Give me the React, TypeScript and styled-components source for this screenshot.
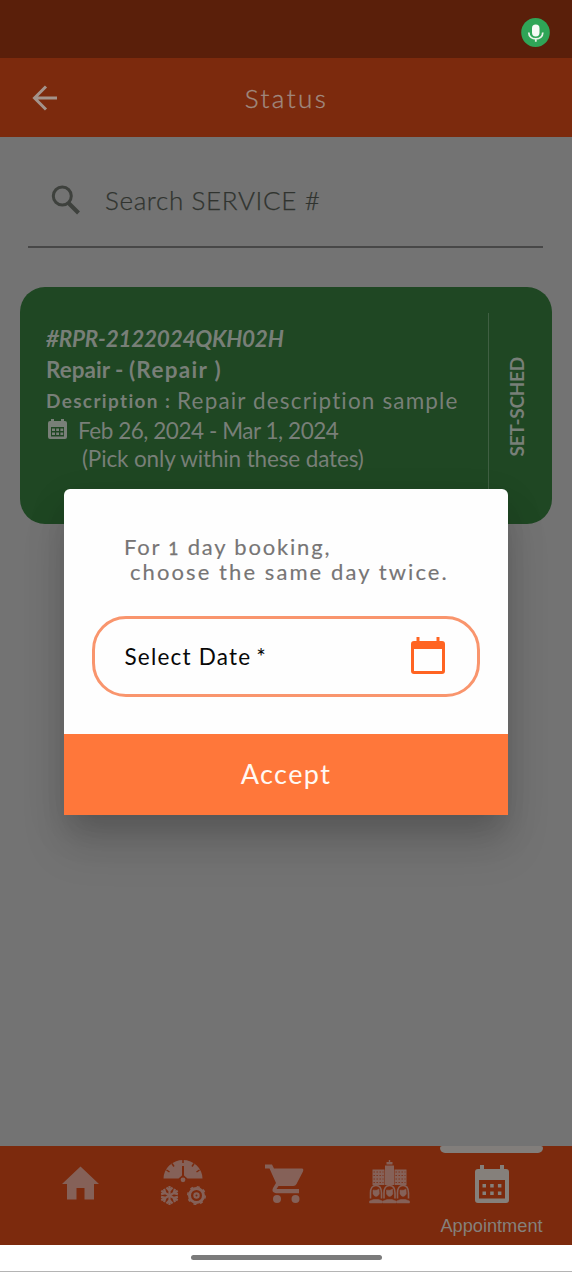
import React from "react";
import styled, { createGlobalStyle } from "styled-components";

const GlobalStyle = createGlobalStyle`
  * { box-sizing: border-box; }
  body { margin: 0; background: #737373; font-family: Lato, "Liberation Sans", sans-serif; }
`;

const Screen = styled.div`
  position: relative;
  width: 572px;
  height: 1272px;
  display: flex;
  flex-direction: column;
  overflow: hidden;
  background: #737373;
`;

const StatusBar = styled.div`
  height: 58px;
  flex: none;
  display: flex;
  justify-content: flex-end;
  padding: 18px 22px 0 0;
  background: #5a1f0a;
`;

const Header = styled.header`
  height: 79px;
  flex: none;
  display: grid;
  grid-template-columns: 72px 1fr 72px;
  align-items: center;
  background: #7c2a0d;
  svg { margin-left: 30px; }
`;

const Title = styled.h1`
  margin: 0;
  padding-left: 1px;
  text-align: center;
  font-size: 26px;
  font-weight: 300;
  letter-spacing: 2.4px;
  color: #a08a80;
  -webkit-text-stroke: 0.35px #a08a80;
`;

const Content = styled.main`
  flex: 1;
  padding: 0 20px;
`;

const SearchField = styled.div`
  height: 111px;
  margin: 0 9px 39px 8px;
  padding: 15px 0 0 22px;
  display: flex;
  align-items: center;
  gap: 21px;
  border-bottom: 2px solid #474747;
  font-size: 26px;
  font-weight: 300;
  letter-spacing: 0.65px;
  color: #30332f;
  -webkit-text-stroke: 0.25px #30332f;
  span { padding-top: 1px; }
`;

const Card = styled.section`
  height: 237px;
  display: flex;
  border-radius: 25px;
  background: #1f4723;
  color: #787f78;
`;

const CardBody = styled.div`
  width: 469px;
  margin: 26px 0;
  padding: 10px 0 0 26px;
  border-right: 1px solid #3f5f42;
`;

const Line = styled.div<{ $h: number; $size?: number; $spacing?: number; $bold?: boolean; $italic?: boolean; $indent?: number }>`
  height: ${(p) => p.$h}px;
  line-height: ${(p) => p.$h}px;
  padding-left: ${(p) => p.$indent ?? 0}px;
  display: flex;
  white-space: pre;
  font-size: ${(p) => p.$size ?? 22.5}px;
  letter-spacing: ${(p) => p.$spacing ?? 0}px;
  font-weight: ${(p) => (p.$bold ? 700 : 400)};
  font-style: ${(p) => (p.$italic ? "italic" : "normal")};
`;

const Spaced = styled.span<{ $spacing: number; $size?: number; $bold?: boolean }>`
  letter-spacing: ${(p) => p.$spacing}px;
  font-size: ${(p) => p.$size ?? 22.5}px;
  font-weight: ${(p) => (p.$bold ? 700 : 400)};
`;

const CardSide = styled.div`
  width: 63px;
  display: flex;
  align-items: center;
  justify-content: center;
  span {
    writing-mode: vertical-rl;
    transform: rotate(180deg);
    font-size: 19px;
    letter-spacing: -0.25px;
    font-weight: 700;
    margin: 2px 8px 0 0;
  }
`;

const Dialog = styled.div`
  position: absolute;
  left: 64px;
  top: 489px;
  width: 444px;
  height: 326px;
  display: flex;
  flex-direction: column;
  border-radius: 6px 6px 0 0;
  background: #fefefe;
  box-shadow: 0 18px 26px -10px rgba(0, 0, 0, 0.13), 0 32px 44px 2px rgba(0, 0, 0, 0.1), 0 14px 40px 2px rgba(0, 0, 0, 0.08);
`;

const Message = styled.p`
  margin: 0;
  padding: 45px 0 0 60px;
  height: 127px;
  line-height: 25px;
  font-size: 22px;
  color: #777575;
  -webkit-text-stroke: 0.15px #777575;
`;

const MessageLine = styled.span<{ $spacing: number; $indent?: number }>`
  display: block;
  height: 25px;
  white-space: pre;
  padding-left: ${(p) => p.$indent ?? 0}px;
  letter-spacing: ${(p) => p.$spacing}px;
`;

const SmallDigit = styled.span`
  font-size: 17.5px;
  -webkit-text-stroke: 0.4px #777575;
`;

const DateField = styled.div`
  width: 388px;
  height: 81px;
  margin-left: 28px;
  padding: 0 31px 2px 29.5px;
  display: flex;
  align-items: center;
  justify-content: space-between;
  border: 3px solid #f9956d;
  border-radius: 34px;
  font-size: 22.5px;
  letter-spacing: 1.2px;
  color: #080808;
`;

const DateLabel = styled.span`
  padding-top: 2px;
`;

const Asterisk = styled.span`
  margin-left: -2px;
`;

const AcceptButton = styled.button`
  height: 81px;
  margin-top: auto;
  padding: 0 0 3px;
  border: 0;
  background: #ff773a;
  color: #fff8f2;
  font: 400 27px Lato, sans-serif;
  letter-spacing: 1.4px;
`;

const NavBar = styled.nav`
  height: 99px;
  flex: none;
  display: grid;
  grid-template-columns: repeat(5, 103px);
  padding-left: 28px;
  background: #7c2a0d;
`;

const NavItem = styled.div<{ $active?: boolean }>`
  display: flex;
  flex-direction: column;
  align-items: center;
  color: ${(p) => (p.$active ? "#85807b" : "#856158")};
  white-space: nowrap;
`;

const Indicator = styled.div<{ $active?: boolean }>`
  width: 103px;
  height: 7px;
  margin-bottom: 5px;
  border-radius: 2px 2px 5px 5px;
  background: ${(p) => (p.$active ? "#827e7b" : "transparent")};
`;

const NavLabel = styled.span`
  font: 18.2px/24px "Liberation Sans", sans-serif;
`;

const GestureBar = styled.div`
  height: 27px;
  flex: none;
  display: flex;
  justify-content: center;
  padding-top: 10px;
  background: #fff;
  border-bottom: 1px solid #b4b4b4;
`;

const Handle = styled.div`
  width: 191px;
  height: 5px;
  border-radius: 3px;
  background: #7b7b7b;
`;

const MicBadge = () => (
  <svg width="29" height="30" viewBox="0 0 29 30">
    <ellipse cx="14.5" cy="14.500" rx="14.300" ry="14.5" fill="#2fa557" />
    <rect x="11" y="6.5" width="7.500" height="12" rx="3.7" fill="#f6faf6" />
    <path d="M7.800 14.500c0 8.500 14 8.500 14 0M14.800 20.800v3" fill="none" stroke="#e8f2e8" strokeWidth="1.8" />
  </svg>
);

const BackArrow = () => (
  <svg width="32" height="32" viewBox="0 0 32 32" fill="none" stroke="#a3938b" strokeWidth="3">
    <path d="M27 16H4.500M16 4.500 4.500 16 16 27.500" />
  </svg>
);

const SearchIcon = () => (
  <svg width="34" height="34" viewBox="0 0 34 34" fill="none" stroke="#3e413d">
    <circle cx="12.300" cy="14" r="9" strokeWidth="3" />
    <path d="m18.500 21 10 10" strokeWidth="4" />
  </svg>
);

const SmallCalendar = () => (
  <svg width="32" height="28" viewBox="0 0 32 28">
    <g transform="translate(0 1)">
      <path fill="#787f78" d="M4 4h1V2h3v2h7V2h3v2h1q2 0 2 2v14q0 2-2 2H4q-2 0-2-2V6q0-2 2-2Z" />
      <path fill="#1f4723" d="M5 10h13v9.500H5z" />
      <path fill="#787f78" d="M6 11.500h3V14H6zm4.200 0H13V14h-2.800zm4.200 0h2.800V14h-2.800zM6 15.500h3V18H6zm4.200 0H13V18h-2.800zm4.200 0h2.800V18h-2.800z" />
    </g>
  </svg>
);

const DateIcon = () => (
  <svg width="35" height="40" viewBox="0 0 35 40">
    <path
      fill="#ff6422"
      fillRule="evenodd"
      d="M3 5h2.500V1h3v4h17V1h3v4H31q3 0 3 3v27q0 3-3 3H3q-3 0-3-3V8q0-3 3-3Zm0 8v22h28V13Z"
    />
  </svg>
);

const NavSvg = styled.svg`
  display: block;
  flex: none;
`;

const HomeIcon = () => (
  <NavSvg width="48" height="56" viewBox="0 0 48 56" fill="currentColor">
    <path d="M24.500 8.500 43 26h-5v15.500h-9.500V30h-8v11.500H11V26H6Z" />
  </NavSvg>
);

const DialIcon = () => (
  <NavSvg width="48" height="56" viewBox="0 0 48 56">
    <path fill="currentColor" d="M4.500 20.500a19.500 18.500 0 0 1 39 0H28.500L25 17.500V8h-2v9.500l-3.500 3Z" />
    <path stroke="#7c2a0d" strokeWidth="1.500" d="M24 1v4M13 5.500l2 3M35 5.500l-2 3M7.500 12l3 2M40.500 12l-3 2" />
    <circle cx="24" cy="21.800" r="2.400" fill="currentColor" />
    <g stroke="currentColor" fill="none">
      {[0, 60, 120, 180, 240, 300].map((angle) => (
        <path
          key={angle}
          transform={`rotate(${angle} 10.500 37.500)`}
          strokeWidth="2.200"
          d="M10.500 37.500v-9.500M7.500 29.500l3 3.300 3-3.300"
        />
      ))}
      <circle cx="37.500" cy="37.500" r="7" strokeWidth="3" />
      <circle cx="37.500" cy="37.500" r="8.700" strokeWidth="1.600" strokeDasharray="3 3.830" />
    </g>
    <circle cx="37.500" cy="37.500" r="3.200" fill="currentColor" />
    <circle cx="37.500" cy="37.500" r="1" fill="#7c2a0d" />
  </NavSvg>
);

const CartIcon = () => (
  <NavSvg width="48" height="56" viewBox="0 0 48 56" fill="currentColor">
    <path d="M3 6.500h7l2 4h28.500q1.500 1 .5 3L34.500 26q-1 2-3 2H16.500l-2 3H37v4.200H14q-5-1-3-5.200l3-5L7.500 10.500H3Z" />
    <circle cx="15" cy="41" r="4" />
    <circle cx="33.500" cy="41" r="4" />
  </NavSvg>
);

const PersonGlyph = ({ x }: { x: number }) => (
  <g transform={`translate(${x} 27)`} stroke="currentColor" strokeWidth="1.600" fill="none">
    <path d="M1 13.500V8Q1 .5 6.500.5T12 8v5.500" />
    <path fill="currentColor" strokeWidth="0.500" d="M3.500 5q3.500 1 6-1l.3 5q-3.300 5-6.300 0ZM0 18v-2l4-1.500h5l4 1.500v2Z" />
  </g>
);

const CommunityIcon = () => (
  <NavSvg width="48" height="56" viewBox="0 0 48 56">
    <g fill="currentColor">
      <path d="M7.500 11.500h12V27h-12zM29.500 11.500h12V27h-12zM20 7.500h9V27h-9zM21.500 4h6v2.500h-6zM23.800 2h1.400v3h-1.400z" />
      <PersonGlyph x={4.500} />
      <PersonGlyph x={18} />
      <PersonGlyph x={31.500} />
    </g>
    <path
      stroke="#7c2a0d"
      strokeWidth="0.800"
      strokeDasharray="1.400 1.600"
      d="M8.500 14h10M8.500 17.500h10M8.500 21h10M8.500 24.500h10M30.500 14h10M30.500 17.500h10M30.500 21h10M30.500 24.500h10"
    />
  </NavSvg>
);

const AppointmentIcon = () => (
  <NavSvg width="48" height="56" viewBox="0 0 48 56">
    <path fill="currentColor" d="M10 11h2V7h4v4h16V7h4v4h2q3 0 3 3v28q0 3-3 3H10q-3 0-3-3V14q0-3 3-3Z" />
    <path fill="#7c2a0d" d="M11 22h26v18.500H11z" />
    <path fill="currentColor" d="M14.500 26H18v3.500h-3.500zm7.700 0h3.500v3.500h-3.500zm7.700 0h3.500v3.500h-3.500zM14.500 33.500H18V37h-3.500zm7.700 0h3.500V37h-3.500zm7.700 0h3.500V37h-3.500z" />
  </NavSvg>
);

const navItems = [
  { id: "home", Icon: HomeIcon },
  { id: "services", Icon: DialIcon },
  { id: "cart", Icon: CartIcon },
  { id: "community", Icon: CommunityIcon },
  { id: "appointment", Icon: AppointmentIcon, label: "Appointment" },
];

export default function App() {
  return (
    <Screen>
      <GlobalStyle />
      <StatusBar>
        <MicBadge />
      </StatusBar>
      <Header>
        <BackArrow />
        <Title>Status</Title>
      </Header>
      <Content>
        <SearchField>
          <SearchIcon />
          <span>Search SERVICE #</span>
        </SearchField>
        <Card>
          <CardBody>
            <Line $h={31} $spacing={-0.25} $bold $italic>#RPR-2122024QKH02H</Line>
            <Line $h={32} $bold>
              Repair - <Spaced $spacing={1.3} $bold>(Repair )</Spaced>
            </Line>
            <Line $h={30}>
              <Spaced $spacing={1.35} $size={19} $bold>Description : </Spaced>
              <Spaced $spacing={1.15}>Repair description sample</Spaced>
            </Line>
            <Line $h={30} $spacing={-0.46}>
              <SmallCalendar />Feb 26, 2024 - Mar 1, 2024
            </Line>
            <Line $h={25} $spacing={-0.14} $indent={36}>(Pick only within these dates)</Line>
          </CardBody>
          <CardSide>
            <span>SET-SCHED</span>
          </CardSide>
        </Card>
      </Content>
      <NavBar>
        {navItems.map(({ id, Icon, label }) => (
          <NavItem key={id} $active={!!label}>
            <Indicator $active={!!label} />
            <Icon />
            {label && <NavLabel>{label}</NavLabel>}
          </NavItem>
        ))}
      </NavBar>
      <GestureBar>
        <Handle />
      </GestureBar>
      <Dialog role="dialog">
        <Message>
          <MessageLine $spacing={1.8}>
            For <SmallDigit>1</SmallDigit> day booking,
          </MessageLine>
          <MessageLine $spacing={2.08} $indent={6}>choose the same day twice.</MessageLine>
        </Message>
        <DateField>
          <DateLabel>Select Date <Asterisk>*</Asterisk></DateLabel>
          <DateIcon />
        </DateField>
        <AcceptButton>Accept</AcceptButton>
      </Dialog>
    </Screen>
  );
}
